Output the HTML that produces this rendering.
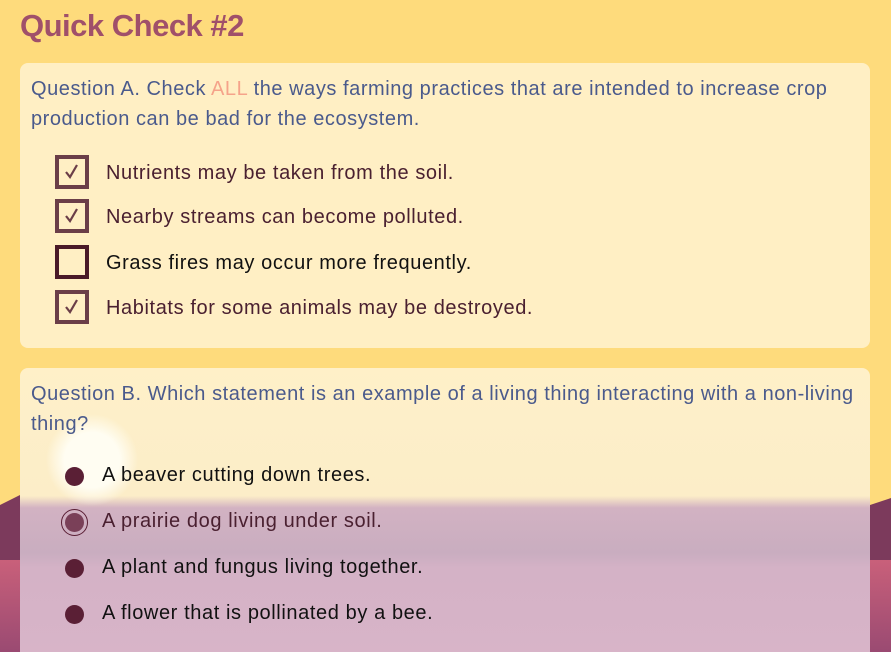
<!DOCTYPE html>
<html><head><meta charset="utf-8"><style>
*{margin:0;padding:0;box-sizing:border-box}
html,body{width:891px;height:652px;overflow:hidden}
body{position:relative;font-family:"Liberation Sans",sans-serif;background:#fedb7c}
.bg{position:absolute;left:0;top:0;width:891px;height:652px}
h1{position:absolute;left:20px;top:8px;font-size:31px;color:#a0506a;font-weight:bold;letter-spacing:-0.5px}
.card{position:absolute;left:20px;width:850px;background:rgba(255,244,214,0.8);border-radius:8px}
.q{position:absolute;left:11px;color:#4a5a8c;font-size:20px;line-height:30px;letter-spacing:0.55px}
.row{position:absolute;left:35px;height:34px;font-size:20px;letter-spacing:0.6px;display:flex;align-items:center;padding-top:3px}
.cb{width:34px;height:34px;border:4px solid #6b3e48;margin-right:17px;position:relative;margin-top:-3px}
.cb svg{position:absolute;left:4px;top:4px}
.rd{position:absolute;width:19px;height:19px;border-radius:50%;background:#5a1f35}
.rt{position:absolute;left:82px;font-size:20px;letter-spacing:0.6px;color:#111}
</style></head><body>
<svg class="bg" viewBox="0 0 891 652">
<defs><linearGradient id="w" x1="0" y1="0" x2="0" y2="1"><stop offset="0" stop-color="#c9607a"/><stop offset="1" stop-color="#9a4a72"/></linearGradient></defs>
<rect width="891" height="652" fill="#fedb7c"/>
<path d="M0 505 L20 495 L40 505 L70 498 L100 505 L140 500 L180 504 L230 498 L300 504 L380 496 L450 505 L520 498 L600 504 L680 496 L760 503 L820 496 L870 505 L891 498 L891 560 L0 560Z" fill="#7c3a5c"/>
<rect y="560" width="891" height="92" fill="url(#w)"/>
</svg>
<h1>Quick Check #2</h1>
<div class="card" style="top:63px;height:285px">
<div class="q" style="top:11px">Question A. Check <span style="color:#f5a38a">ALL</span> the ways farming practices that are intended to increase crop<br>production can be bad for the ecosystem.</div>
<div class="row" style="top:92px;color:#4a2030"><div class="cb"><svg width="18" height="18" viewBox="0 0 18 18"><path d="M3 9 L7 14 L14 2" stroke="#6b3e48" stroke-width="2.2" fill="none"/></svg></div>Nutrients may be taken from the soil.</div>
<div class="row" style="top:136px;color:#4a2030"><div class="cb"><svg width="18" height="18" viewBox="0 0 18 18"><path d="M3 9 L7 14 L14 2" stroke="#6b3e48" stroke-width="2.2" fill="none"/></svg></div>Nearby streams can become polluted.</div>
<div class="row" style="top:182px;color:#111"><div class="cb" style="border-color:#4a1a28"></div>Grass fires may occur more frequently.</div>
<div class="row" style="top:227px;color:#4a2030"><div class="cb"><svg width="18" height="18" viewBox="0 0 18 18"><path d="M3 9 L7 14 L14 2" stroke="#6b3e48" stroke-width="2.2" fill="none"/></svg></div>Habitats for some animals may be destroyed.</div>
</div>
<div class="card" style="top:368px;height:284px;border-radius:8px 8px 0 0;background:linear-gradient(to bottom,#fff0c8 0,#fdefc9 50px,#fcedc8 128px,#d2b2c2 140px,#c9adc0 185px,#d4b2c6 200px,#d8b4c8 290px)">
<svg style="position:absolute;left:22px;top:42px" width="100" height="100"><defs><radialGradient id="s2"><stop offset="0.6" stop-color="#fffdf2"/><stop offset="1" stop-color="#fffdf2" stop-opacity="0"/></radialGradient></defs><circle cx="50" cy="50" r="46" fill="url(#s2)"/></svg>
<div class="q" style="top:11px">Question B. Which statement is an example of a living thing interacting with a non-living<br>thing?</div>
<div class="rd" style="left:45px;top:99px"></div><div class="rt" style="top:96px">A beaver cutting down trees.</div>
<div class="rd" style="left:45px;top:145px;background:#7a4058;outline:1.5px solid #5a1f35;outline-offset:3px"></div><div class="rt" style="top:142px;color:#4a2030">A prairie dog living under soil.</div>
<div class="rd" style="left:45px;top:191px"></div><div class="rt" style="top:188px">A plant and fungus living together.</div>
<div class="rd" style="left:45px;top:237px"></div><div class="rt" style="top:234px">A flower that is pollinated by a bee.</div>
</div>
</body></html>
